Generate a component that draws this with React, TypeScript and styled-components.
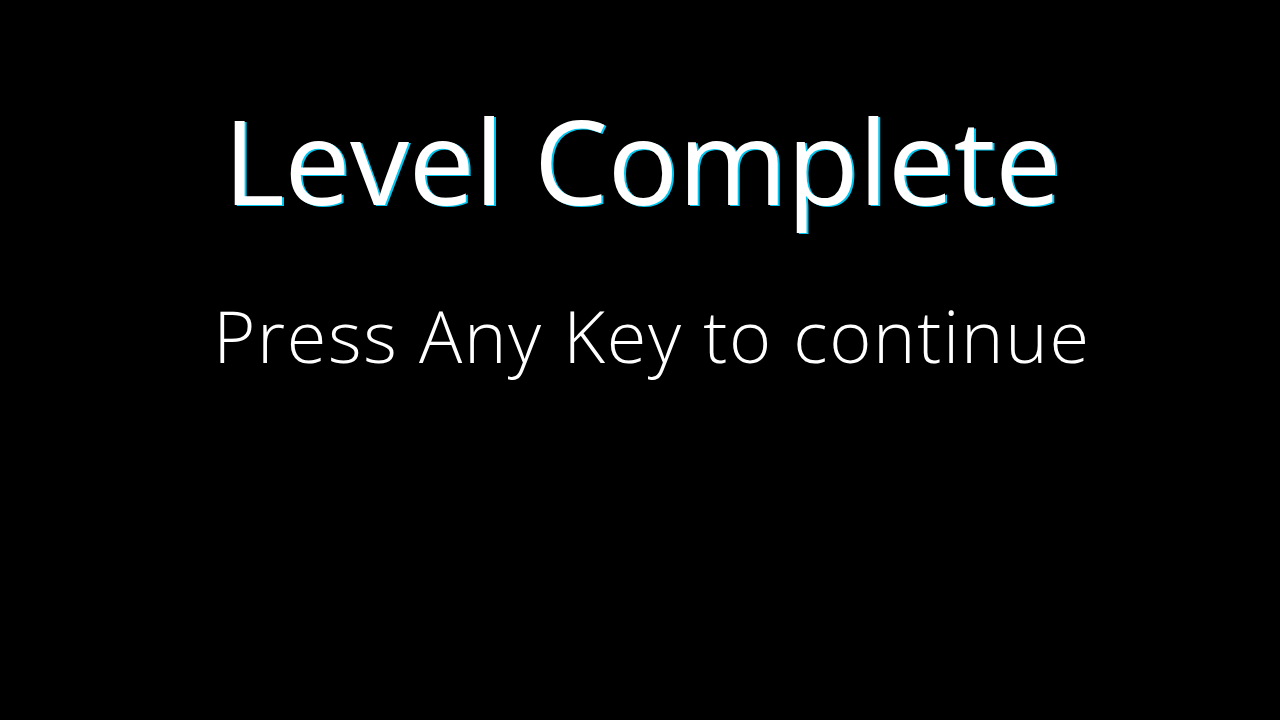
import styled, { createGlobalStyle } from 'styled-components'

const Global = createGlobalStyle`
	html, body {
		margin: 0;
		padding: 0;
		background: #000;
	}
	body {
		font-family: 'Open Sans', 'Noto Sans', sans-serif;
	}
`

const Screen = styled.main`
	width: 1280px;
	height: 720px;
	background: #000;
	display: flex;
	flex-direction: column;
	align-items: center;
	padding-top: 85px;
	box-sizing: border-box;
	overflow: hidden;
`

const Title = styled.h1`
	margin: 0;
	font-size: 118px;
	font-weight: 400;
	line-height: 150px;
	letter-spacing: -0.5px;
	color: #fff;
	text-shadow: 2px 1px 0 #00c8f0;
	transform: translateX(2px);
`

const Hint = styled.p`
	margin: 0;
	margin-top: 50px;
	font-size: 72px;
	font-weight: 300;
	line-height: 100px;
	letter-spacing: 1.7px;
	color: #fff;
	transform: translateX(12px);
`

export default function App() {
	return (
		<>
			<Global />
			<Screen>
				<Title>Level Complete</Title>
				<Hint>Press Any Key to continue</Hint>
			</Screen>
		</>
	)
}
